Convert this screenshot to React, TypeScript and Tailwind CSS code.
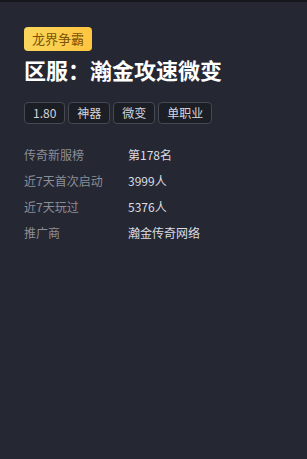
const stats = [
  { label: "传奇新服榜", value: "第178名" },
  { label: "近7天首次启动", value: "3999人" },
  { label: "近7天玩过", value: "5376人" },
  { label: "推广商", value: "瀚金传奇网络" },
];

const tags = ["1.80", "神器", "微变", "单职业"];

export default function App() {
  return (
    <div
      className="min-h-[459px] border-t-2 border-[#16171d] bg-[#252733] px-6 pt-[23px]"
      style={{ fontFamily: '"Noto Sans CJK SC", "Noto Sans", sans-serif' }}
    >
      <span className="inline-flex h-6 items-center rounded-[4px] bg-gradient-to-r from-[#f9d65c] to-[#ffc53e] px-2 text-[13px] text-[#7d5406]">
        龙界争霸
      </span>
      <h1 className="mt-[3px] text-[22px] leading-[30px] font-bold text-white">区服：瀚金攻速微变</h1>
      <div className="mt-[18px] flex gap-[3px]">
        {tags.map((t) => (
          <span
            key={t}
            className="flex h-[22px] items-center rounded-[4px] border border-[#464852] bg-[#1c1e25] px-2 text-[12px] text-[#d4d5da]"
          >
            {t}
          </span>
        ))}
      </div>
      <div className="mt-[18px] flex flex-col">
        {stats.map((s) => (
          <div key={s.label} className="flex h-[26px] items-center text-[12px]">
            <span className="w-[104px] text-[#8b8e97]">{s.label}</span>
            <span className="text-[#dcdde2]">{s.value}</span>
          </div>
        ))}
      </div>
    </div>
  );
}
